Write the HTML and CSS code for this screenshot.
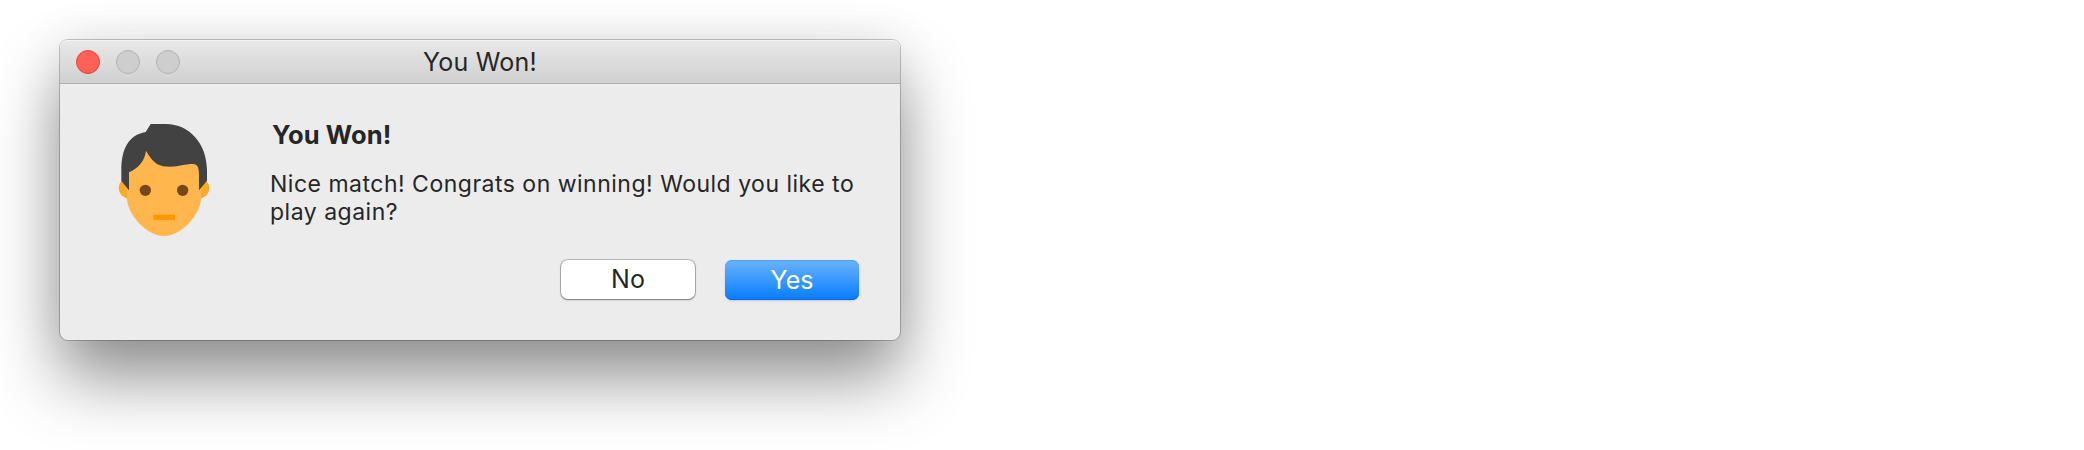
FILE: index.html
```
<!DOCTYPE html>
<html lang="en">
<head>
<meta charset="utf-8">
<title>You Won!</title>
<link rel="stylesheet" href="styles.css">
</head>
<body>
<main class="window">
  <header class="titlebar">
    <div class="lights"><span class="light close"></span><span class="light"></span><span class="light"></span></div>
    <span class="title">You Won!</span>
  </header>
  <section class="content">
    <svg class="avatar" viewBox="0 0 390 420" aria-hidden="true">
      <circle cx="87" cy="234" r="31" fill="#ffa726"/>
      <circle cx="297" cy="234" r="31" fill="#ffa726"/>
      <path fill="#ffb74d" d="M304 153C304 80 80 105 80 153V257C80 319 145 378 192 378S304 319 304 257Z"/>
      <path fill="#424242" d="M152 42L137 66C85 75 64 118 64 181V213L87 241V187C119 172 134 151 138 122C160 163 180 170 210 170C238 170 254 162 279 162C292 162 297 172 297 195V241L321 212V181C321 103 270 42 197 42Z"/>
      <circle cx="136" cy="241" r="17" fill="#784719"/>
      <circle cx="248" cy="241" r="17" fill="#784719"/>
      <path fill="#ff9800" d="M160 314H225V330H160Z"/>
    </svg>
    <div class="message">
      <h1 class="heading">You Won!</h1>
      <p class="body">Nice match! Congrats on winning! Would you like to play again?</p>
      <div class="actions">
        <button class="button" type="button">No</button>
        <button class="button primary" type="button">Yes</button>
      </div>
    </div>
  </section>
</main>
</body>
</html>
```
FILE: styles.css
```
* { box-sizing: border-box; }
body {
  margin: 0;
  padding: 40px 60px;
  height: 450px;
  overflow: hidden;
  background: #fff;
  color: #262626;
  font-family: Inter, sans-serif;
}
.window {
  width: 840px;
  height: 300px;
  border-radius: 8px;
  background: #ececec;
  box-shadow: 0 0 0 1px rgba(0, 0, 0, .22), 0 38px 68px rgba(0, 0, 0, .43), 0 0 50px rgba(0, 0, 0, .08);
}
.titlebar {
  display: grid;
  grid-template-columns: 1fr auto 1fr;
  align-items: center;
  height: 44px;
  padding: 0 16px;
  border-bottom: 1px solid #b1b1b1;
  border-radius: 8px 8px 0 0;
  background: linear-gradient(#e9e9e9, #d0d0d0);
  box-shadow: inset 0 1px #f5f5f5;
}
.lights { display: flex; gap: 16px; padding-top: 1px; }
.light {
  width: 24px;
  height: 24px;
  border: 1px solid #b4b4b4;
  border-radius: 50%;
  background: #cecece;
}
.close { border-color: #e2463f; background: #ff6157; }
.title { font-size: 25px; line-height: 32px; letter-spacing: .2px; }
.content { display: flex; padding: 26px 40px 0; }
.avatar { flex: none; width: 130px; height: 140px; }
.message { flex: none; width: 590px; margin-left: 40px; padding-top: 9px; }
.heading { margin: 0 0 0 2px; font-size: 25.5px; line-height: 32px; font-weight: 700; letter-spacing: .1px; }
.body { margin: 19px 0 0; font-size: 23px; line-height: 28px; letter-spacing: .5px; }
.actions { display: flex; justify-content: flex-end; gap: 30px; margin-top: 34px; padding-right: 1px; }
.button {
  width: 134px;
  height: 39px;
  padding: 0;
  border: 0;
  border-radius: 7px;
  background: #fff;
  box-shadow: 0 0 0 1px rgba(0, 0, 0, .22), 0 1px 2px rgba(0, 0, 0, .35);
  color: #262626;
  font: 25px/39px Inter, sans-serif;
}
.primary {
  height: 40px;
  background: linear-gradient(#6bb3fa, #077dff);
  box-shadow: inset 0 1px #4ba0f8, inset 0 -1px #0068f5, 0 1px 2px rgba(0, 0, 0, .15);
  color: #fff;
}
```
